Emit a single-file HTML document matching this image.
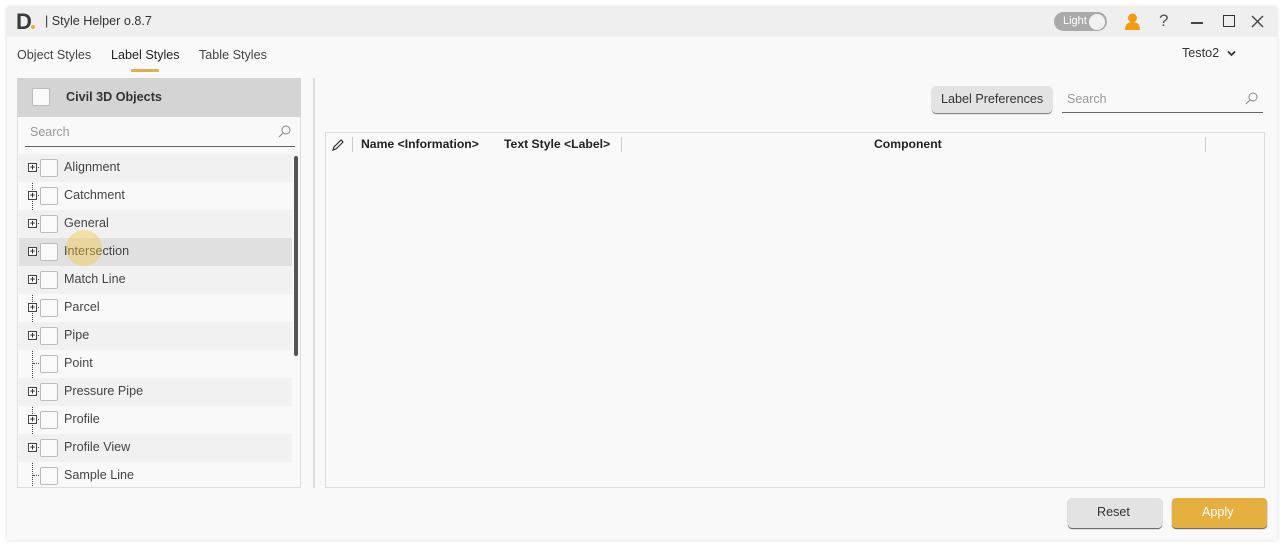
<!DOCTYPE html>
<html><head><meta charset="utf-8"><style>
*{box-sizing:border-box;margin:0;padding:0}
body{width:1284px;height:546px;background:#fff;font-family:"Liberation Sans",sans-serif;color:#333;position:relative;overflow:hidden}
.a{position:absolute}
.win{left:7px;top:7px;width:1270px;height:533px;background:#f9f9f9;box-shadow:0 0 4px rgba(0,0,0,.15)}
.title{left:7px;top:7px;width:1270px;height:30px;background:#efefef}
.t{font-size:12.6px;color:#444}
.row{left:19px;width:273px;height:28px}
.cb{width:18px;height:18px;border:1px solid #bbb;border-radius:2px;background:#fafafa}
.plus{width:9px;height:9px;border:1px solid #444;background:#fff;font-size:9px;line-height:7px;text-align:center;font-weight:bold}
</style></head><body>
<div class="a win"></div>
<div class="a title"></div>
<div class="a" style="left:16px;top:9px;font-size:22px;font-weight:bold;color:#3a3a3a">D</div>
<div class="a" style="left:31px;top:25px;width:4px;height:4px;border-radius:2px;background:#e8b040"></div>
<div class="a t" style="left:45px;top:14px;color:#333">| Style Helper o.8.7</div>
<div class="a" style="left:1054px;top:12px;width:53px;height:19px;border-radius:10px;background:#aaa"></div>
<div class="a" style="left:1063px;top:15px;font-size:11px;color:#fff">Light</div>
<div class="a" style="left:1089px;top:14px;width:16px;height:16px;border-radius:8px;background:#f2f2f2"></div>
<svg class="a" style="left:1124px;top:13px" width="17" height="17"><circle cx="8.5" cy="5" r="4.5" fill="#f39c12"/><path d="M1 17 Q1 9 8.5 9 Q16 9 16 17Z" fill="#f39c12"/></svg>
<div class="a" style="left:1159px;top:11px;font-size:17px;color:#555">?</div>
<div class="a" style="left:1191px;top:22px;width:12px;height:1.5px;background:#444"></div>
<div class="a" style="left:1223px;top:15px;width:12px;height:12px;border:1.5px solid #333"></div>
<svg class="a" style="left:1251px;top:15px" width="13" height="13"><path d="M1 1L12 12M12 1L1 12" stroke="#444" stroke-width="1.4"/></svg>
<div class="a t" style="left:17px;top:48px">Object Styles</div>
<div class="a t" style="left:111px;top:48px;color:#222">Label Styles</div>
<div class="a" style="left:131px;top:69px;width:28px;height:3px;background:#e0b050;border-radius:1px"></div>
<div class="a t" style="left:199px;top:48px">Table Styles</div>
<div class="a t" style="left:1182px;top:46px;color:#333">Testo2</div>
<svg class="a" style="left:1227px;top:50px" width="9" height="7"><path d="M1 1.5L4.5 5L8 1.5" fill="none" stroke="#333" stroke-width="1.8"/></svg>
<div class="a" style="left:17px;top:78px;width:284px;height:410px;border:1px solid #ddd;background:#f9f9f9"></div>
<div class="a" style="left:17px;top:78px;width:284px;height:39px;background:#d4d4d4"></div>
<div class="a cb" style="left:32px;top:88px;width:18px;height:18px"></div>
<div class="a" style="left:66px;top:90px;font-size:12.6px;font-weight:bold;color:#333">Civil 3D Objects</div>
<div class="a" style="left:30px;top:125px;font-size:12.5px;color:#999">Search</div>
<svg class="a" style="left:278px;top:125px" width="13" height="13"><circle cx="8" cy="5" r="4" fill="none" stroke="#888"/><path d="M5 8L1 12" stroke="#888"/></svg>
<div class="a" style="left:25px;top:146px;width:270px;height:1px;background:#666"></div>
<div class="a" style="left:294px;top:156px;width:4px;height:200px;background:#555;border-radius:2px"></div>
<div class="a" style="left:32px;top:156px;height:330px;border-left:1px dotted #444"></div>
<div id="rows"></div>
<div class="a" style="left:313px;top:78px;width:2px;height:410px;background:#ddd"></div>
<div class="a" style="left:932px;top:86px;width:120px;height:27px;background:#e3e3e3;border-radius:4px;box-shadow:0 1px 1px #777"></div>
<div class="a t" style="left:941px;top:92px;color:#333">Label Preferences</div>
<div class="a" style="left:1067px;top:92px;font-size:12.5px;color:#999">Search</div>
<svg class="a" style="left:1245px;top:92px" width="13" height="13"><circle cx="8" cy="5" r="4" fill="none" stroke="#888"/><path d="M5 8L1 12" stroke="#888"/></svg>
<div class="a" style="left:1062px;top:112px;width:201px;height:1px;background:#666"></div>
<div class="a" style="left:325px;top:132px;width:940px;height:356px;border:1px solid #ddd;background:#f9f9f9"></div>
<svg class="a" style="left:332px;top:139px" width="12" height="12"><path d="M1 11L2 8L9 1L11 3L4 10Z" fill="none" stroke="#333" stroke-width="1.2"/></svg>
<div class="a" style="left:352px;top:137px;width:1px;height:15px;background:#ccc"></div>
<div class="a" style="left:361px;top:137px;font-size:12.2px;font-weight:bold;color:#222">Name &lt;Information&gt;</div>
<div class="a" style="left:504px;top:137px;font-size:12.2px;font-weight:bold;color:#222">Text Style &lt;Label&gt;</div>
<div class="a" style="left:621px;top:137px;width:1px;height:15px;background:#ccc"></div>
<div class="a" style="left:874px;top:137px;font-size:12.2px;font-weight:bold;color:#222">Component</div>
<div class="a" style="left:1205px;top:137px;width:1px;height:15px;background:#ccc"></div>
<div class="a" style="left:1068px;top:498px;width:94px;height:30px;background:#e3e3e3;border-radius:4px;box-shadow:0 1px 1px #555"></div>
<div class="a t" style="left:1097px;top:505px;color:#333">Reset</div>
<div class="a" style="left:1172px;top:498px;width:95px;height:30px;background:#e6b040;border-radius:4px;box-shadow:0 1px 1px #555"></div>
<div class="a t" style="left:1202px;top:505px;color:#fff">Apply</div>
<script>
var n=["Alignment","Catchment","General","Intersection","Match Line","Parcel","Pipe","Point","Pressure Pipe","Profile","Profile View","Sample Line"];
var h="";
n.forEach(function(s,i){var y=154+i*28;var bg=i==3?"#e0e0e0":(i%2==0?"#f1f1f1":"transparent");
var last=y+28>488?"height:"+(488-y-1)+"px;":"";
h+='<div class="a row" style="top:'+y+'px;background:'+bg+';'+last+'"></div>';
h+='<div class="a" style="left:33px;top:'+(y+13)+'px;width:6px;border-top:1px dotted #444"></div>';
if(s!="Point"&&s!="Sample Line")h+='<div class="a plus" style="left:28px;top:'+(y+9)+'px">+</div>';
h+='<div class="a cb" style="left:40px;top:'+(y+5)+'px"></div>';
h+='<div class="a t" style="left:64px;top:'+(y+6)+'px;color:#444">'+s+'</div>';});
h+='<div class="a" style="left:66px;top:230px;width:36px;height:36px;border-radius:18px;background:rgba(245,200,60,.4)"></div>';
document.getElementById("rows").innerHTML=h;
</script>
</body></html>
